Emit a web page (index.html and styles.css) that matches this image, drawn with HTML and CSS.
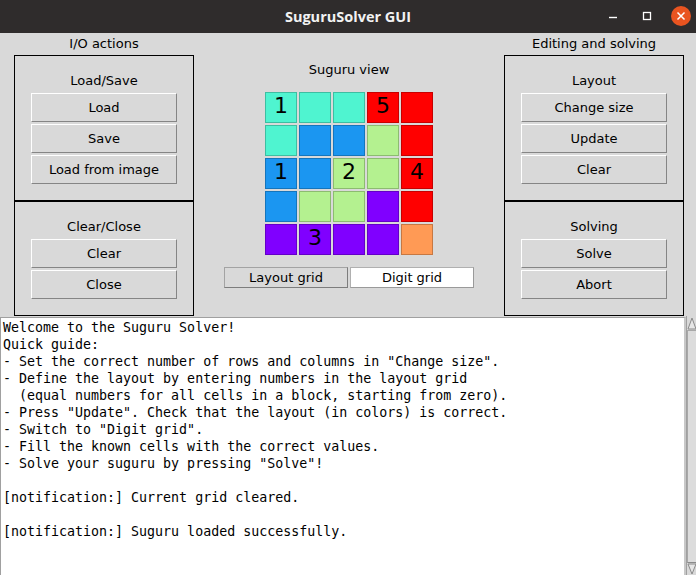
FILE: index.html
```html
<!DOCTYPE html>
<html>
<head>
<meta charset="utf-8">
<title>SuguruSolver GUI</title>
<link rel="stylesheet" href="styles.css">
</head>
<body>
<header class="titlebar">
  <div></div>
  <div class="title">SuguruSolver GUI</div>
  <div class="controls">
    <span class="ctl"><svg width="10" height="10" viewBox="0 0 10 10"><line x1="1" y1="6.5" x2="9" y2="6.5" stroke="#fff" stroke-width="1.4"/></svg></span>
    <span class="ctl"><svg width="10" height="10" viewBox="0 0 10 10"><rect x="1.5" y="1.5" width="7" height="7" fill="none" stroke="#fff" stroke-width="1.3"/></svg></span>
    <span class="ctl"><svg width="20" height="20" viewBox="0 0 20 20"><circle cx="10" cy="10" r="10" fill="#e95420"/><path d="M6.5 6.5 L13.5 13.5 M13.5 6.5 L6.5 13.5" stroke="#fff" stroke-width="1.5"/></svg></span>
  </div>
</header>

<main class="main">
  <section class="side">
    <div class="side-title">I/O actions</div>
    <div class="group">
      <div class="group-title">Load/Save</div>
      <div class="btn">Load</div>
      <div class="btn">Save</div>
      <div class="btn">Load from image</div>
    </div>
    <div class="group">
      <div class="group-title">Clear/Close</div>
      <div class="btn">Clear</div>
      <div class="btn">Close</div>
    </div>
  </section>

  <section class="center">
    <div class="view-title">Suguru view</div>
    <div class="board">
      <div class="cell teal">1</div><div class="cell teal"></div><div class="cell teal"></div><div class="cell red">5</div><div class="cell red"></div>
      <div class="cell teal"></div><div class="cell blue"></div><div class="cell blue"></div><div class="cell green"></div><div class="cell red"></div>
      <div class="cell blue">1</div><div class="cell blue"></div><div class="cell green">2</div><div class="cell green"></div><div class="cell red">4</div>
      <div class="cell blue"></div><div class="cell green"></div><div class="cell green"></div><div class="cell purple"></div><div class="cell red"></div>
      <div class="cell purple"></div><div class="cell purple">3</div><div class="cell purple"></div><div class="cell purple"></div><div class="cell orange"></div>
    </div>
    <div class="tabs">
      <div class="tab">Layout grid</div>
      <div class="tab active">Digit grid</div>
    </div>
  </section>

  <section class="side">
    <div class="side-title">Editing and solving</div>
    <div class="group">
      <div class="group-title">Layout</div>
      <div class="btn">Change size</div>
      <div class="btn">Update</div>
      <div class="btn">Clear</div>
    </div>
    <div class="group">
      <div class="group-title">Solving</div>
      <div class="btn">Solve</div>
      <div class="btn">Abort</div>
    </div>
  </section>
</main>

<section class="console">
<pre class="log">Welcome to the Suguru Solver!
Quick guide:
- Set the correct number of rows and columns in "Change size".
- Define the layout by entering numbers in the layout grid
  (equal numbers for all cells in a block, starting from zero).
- Press "Update". Check that the layout (in colors) is correct.
- Switch to "Digit grid".
- Fill the known cells with the correct values.
- Solve your suguru by pressing "Solve"!

[notification:] Current grid cleared.

[notification:] Suguru loaded successfully.
</pre>
  <div class="scrollbar">
    <svg class="arrow" width="10" height="14" viewBox="0 0 10 14"><polygon points="1,13 5,2 9,13" fill="#e6e6e6" stroke="#8a8a8a" stroke-width="1"/></svg>
    <div class="trough"></div>
    <svg class="arrow" width="10" height="12" viewBox="0 0 10 12"><polygon points="1,1 5,11 9,1" fill="#e6e6e6" stroke="#8a8a8a" stroke-width="1"/></svg>
  </div>
</section>
</body>
</html>
```

FILE: styles.css
```css
html, body {
  margin: 0;
  padding: 0;
}

body {
  width: 696px;
  height: 575px;
  overflow: hidden;
  background: #d9d9d9;
  font-family: "DejaVu Sans", sans-serif;
  font-size: 13px;
  color: #000;
}

.titlebar {
  height: 33px;
  background: #2f2c2c;
  display: grid;
  grid-template-columns: 1fr auto 1fr;
  align-items: center;
}

.title {
  font-family: "Open Sans", sans-serif;
  font-weight: 700;
  font-size: 14.5px;
  color: #f2f2f2;
  padding-bottom: 1px;
}

.controls {
  display: flex;
  justify-content: flex-end;
  gap: 8px;
  padding-right: 2px;
}

.ctl {
  width: 26px;
  height: 33px;
  display: flex;
  align-items: center;
  justify-content: center;
  padding-bottom: 1px;
  box-sizing: border-box;
}

.ctl svg {
  display: block;
}

.main {
  display: grid;
  grid-template-columns: 180px 1fr 180px;
  padding: 0 12px 0 14px;
  height: 284px;
}

.side {
  display: flex;
  flex-direction: column;
}

.side-title {
  text-align: center;
  line-height: 18px;
  padding-top: 2px;
  margin-bottom: 2px;
}

.group {
  border: 1px solid #000;
  padding: 16px;
  display: flex;
  flex-direction: column;
  gap: 2px;
}

.group + .group {
  border-top-width: 1px;
}

.group-title {
  text-align: center;
  line-height: 17px;
  margin-bottom: 2px;
}

.btn {
  height: 29px;
  box-sizing: border-box;
  border: 1px solid;
  border-color: #ffffff #858585 #858585 #ffffff;
  background: #d9d9d9;
  display: flex;
  align-items: center;
  justify-content: center;
}

.center {
  display: flex;
  flex-direction: column;
  align-items: center;
}

.view-title {
  margin-top: 28px;
  line-height: 17px;
}

.board {
  margin-top: 14px;
  display: grid;
  grid-template-columns: repeat(5, 32px);
  grid-auto-rows: 31px;
  gap: 2px;
}

.cell {
  box-sizing: border-box;
  border: 1px solid rgba(0, 0, 0, 0.22);
  font-size: 22px;
  line-height: 1;
  display: flex;
  align-items: center;
  justify-content: center;
  padding-bottom: 3px;
}

.teal { background: #4ff4d0; }
.blue { background: #1b96f1; }
.red { background: #ff0000; }
.green { background: #b4f190; }
.purple { background: #8000ff; }
.orange { background: #ff9a55; }

.tabs {
  margin-top: 12px;
  display: flex;
  gap: 2px;
}

.tab {
  width: 124px;
  height: 21px;
  box-sizing: border-box;
  border: 1px solid;
  border-color: #a3a3a3 #7d7d7d #7d7d7d #a3a3a3;
  display: flex;
  align-items: center;
  justify-content: center;
  background: #d9d9d9;
}

.tab.active {
  background: #ffffff;
  border-color: #b0b0b0 #9a9a9a #9a9a9a #b0b0b0;
}

.console {
  display: flex;
  height: 258px;
}

.log {
  flex: 1;
  margin: 0;
  background: #ffffff;
  border-top: 1px solid #a0a0a0;
  border-left: 1px solid #a0a0a0;
  border-right: 2px solid #c8c8c8;
  padding: 1px 2px;
  font-family: "DejaVu Sans Mono", monospace;
  font-size: 13.3px;
  line-height: 17px;
  white-space: pre;
  overflow: hidden;
  color: #000;
}

.scrollbar {
  width: 10px;
  display: flex;
  flex-direction: column;
  background: #d9d9d9;
  border-left: 1px solid #a0a0a0;
  margin-top: -1px;
  box-sizing: border-box;
}

.arrow {
  display: block;
  flex: none;
}

.trough {
  flex: 1;
  border-left: 1px solid #a8a8a8;
  border-top: 1px solid #a8a8a8;
  border-bottom: 1px solid #8a8a8a;
  background: #dcdcdc;
}
```
